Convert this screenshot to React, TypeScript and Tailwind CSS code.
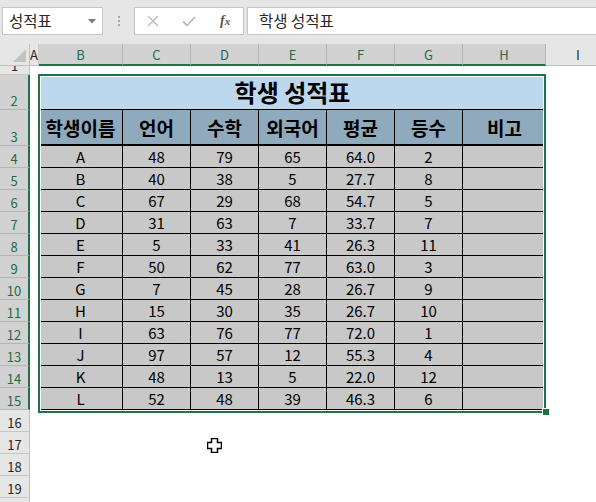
import React from "react";

const cols = [
  { key: "A", w: "w-[9px]", sel: false },
  { key: "B", w: "w-[84px]", sel: true },
  { key: "C", w: "w-[68px]", sel: true },
  { key: "D", w: "w-[68px]", sel: true },
  { key: "E", w: "w-[68px]", sel: true },
  { key: "F", w: "w-[68px]", sel: true },
  { key: "G", w: "w-[68px]", sel: true },
  { key: "H", w: "w-[83px]", sel: true },
];

const tableCols = ["w-[84px]", "w-[68px]", "w-[68px]", "w-[68px]", "w-[68px]", "w-[68px]", "w-[83px]"];

const headers = ["학생이름", "언어", "수학", "외국어", "평균", "등수", "비고"];

const students = [
  ["A", "48", "79", "65", "64.0", "2"],
  ["B", "40", "38", "5", "27.7", "8"],
  ["C", "67", "29", "68", "54.7", "5"],
  ["D", "31", "63", "7", "33.7", "7"],
  ["E", "5", "33", "41", "26.3", "11"],
  ["F", "50", "62", "77", "63.0", "3"],
  ["G", "7", "45", "28", "26.7", "9"],
  ["H", "15", "30", "35", "26.7", "10"],
  ["I", "63", "76", "77", "72.0", "1"],
  ["J", "97", "57", "12", "55.3", "4"],
  ["K", "48", "13", "5", "22.0", "12"],
  ["L", "52", "48", "39", "46.3", "6"],
];

// row headers: label, height class, selected
const rowHeads = [
  { n: "1", h: "h-[9px]", sel: false },
  { n: "2", h: "h-[35px]", sel: true },
  { n: "3", h: "h-[36px]", sel: true },
  ...Array.from({ length: 12 }, (_, i) => ({ n: String(i + 4), h: "h-[22px]", sel: true })),
  ...Array.from({ length: 4 }, (_, i) => ({ n: String(i + 16), h: "h-[22px]", sel: false })),
  { n: "", h: "h-[22px]", sel: false },
];

const FormulaBar = () => (
  <div className="h-[44px] bg-[#e6e6e6] flex items-start pt-[7px] pl-[2px]">
    {/* Name box */}
    <div className="w-[101px] h-[28px] bg-white border border-[#c6c6c6] flex items-center justify-between pl-[6px] pr-[6px]">
      <span className="text-[15.5px] text-[#262626] leading-none">성적표</span>
      <svg width="8" height="5" viewBox="0 0 8 5">
        <path d="M0 0 L8 0 L4 4.5 Z" fill="#7a7a7a" />
      </svg>
    </div>
    {/* dots */}
    <div className="w-[31px] h-[28px] flex flex-col items-center justify-center gap-[2px]">
      <span className="w-[2px] h-[2px] bg-[#a6a6a6]" />
      <span className="w-[2px] h-[2px] bg-[#a6a6a6]" />
      <span className="w-[2px] h-[2px] bg-[#a6a6a6]" />
    </div>
    {/* buttons */}
    <div className="w-[110px] h-[28px] bg-white border border-[#c6c6c6] flex items-center">
      <div className="w-[37px] flex justify-center">
        <svg width="12" height="12" viewBox="0 0 12 12">
          <path d="M1 1 L11 11 M11 1 L1 11" stroke="#bcbcbc" strokeWidth="1.4" />
        </svg>
      </div>
      <div className="w-[36px] flex justify-center">
        <svg width="14" height="11" viewBox="0 0 14 11">
          <path d="M1 5.5 L5 9.5 L13 1" stroke="#bcbcbc" strokeWidth="1.8" fill="none" />
        </svg>
      </div>
      <div className="w-[36px] flex justify-center">
        <span
          className="italic font-bold text-[14px] text-[#555] leading-none"
          style={{ fontFamily: '"Liberation Serif", serif' }}
        >
          f<span className="text-[11px]">x</span>
        </span>
      </div>
    </div>
    {/* formula input */}
    <div className="ml-[3px] flex-1 h-[28px] bg-white border border-[#c6c6c6] border-r-0 flex items-center pl-[11px]">
      <span className="text-[15.5px] text-[#262626] leading-none">학생 성적표</span>
    </div>
  </div>
);

const ColumnHeaders = () => (
  <div className="h-[22px] flex bg-[#e6e6e6]">
    {/* corner */}
    <div className="w-[30px] h-[22px] border-r border-b border-[#bfbfbf] flex items-end justify-end pr-[3px] pb-[3px]">
      <svg width="13" height="13" viewBox="0 0 13 13">
        <path d="M13 0 L13 13 L0 13 Z" fill="#c2c2c2" />
      </svg>
    </div>
    {cols.map((c) => (
      <div
        key={c.key}
        className={`${c.w} h-[22px] flex items-center justify-center text-[13px] leading-none overflow-hidden ${
          c.sel
            ? "bg-[#d2d2d2] text-[#1f6b47] border-r border-r-[#b5b5b5] border-b-2 border-b-[#217346]"
            : "bg-[#e6e6e6] text-[#262626] border-r border-r-[#c6c6c6] border-b border-b-[#bfbfbf]"
        }`}
      >
        {c.key}
      </div>
    ))}
    <div className="flex-1 h-[22px] flex items-center text-[13px] leading-none text-[#262626] border-b border-[#bfbfbf] pl-[30px]">
      I
    </div>
  </div>
);

const RowHeaders = () => (
  <div className="w-[30px] flex flex-col shrink-0">
    {rowHeads.map((r, i) => (
      <div
        key={i}
        className={`${r.h} flex items-end justify-center pb-[2px] text-[13px] leading-none border-b overflow-hidden ${
          r.sel
            ? "bg-[#d2d2d2] text-[#1f6b47] border-b-[#b5b5b5] border-r-2 border-r-[#217346]"
            : "bg-[#e6e6e6] text-[#262626] border-b-[#c6c6c6] border-r border-r-[#bfbfbf]"
        }`}
      >
        {r.n}
      </div>
    ))}
  </div>
);

const ScoreTable = () => (
  <div className="ml-[9px] w-[507px] text-black">
    <div className="h-[35px] bg-[#bdd7ee] border-b border-black flex items-center justify-center">
      <span className="text-[24px] font-bold leading-none">학생 성적표</span>
    </div>
    <div className="h-[36px] flex bg-[#8faabd] border-b-2 border-black">
      {headers.map((h, i) => (
        <div
          key={h}
          className={`${tableCols[i]} flex items-center justify-center text-[19px] font-bold leading-none ${
            i < 6 ? "border-r border-black" : ""
          }`}
        >
          {h}
        </div>
      ))}
    </div>
    {students.map((s) => (
      <div key={s[0]} className="h-[22px] flex bg-[#c8c8c8] border-b border-black">
        {[...s, ""].map((v, i) => (
          <div
            key={i}
            className={`${tableCols[i]} flex items-center justify-center text-[15px] leading-none ${
              i < 6 ? "border-r border-black" : ""
            }`}
          >
            {v}
          </div>
        ))}
      </div>
    ))}
  </div>
);

export default function App() {
  return (
    <div
      className="w-[596px] h-[502px] overflow-hidden bg-white"
      style={{ fontFamily: '"Noto Sans CJK KR", "Noto Sans", sans-serif' }}
    >
      <FormulaBar />
      <ColumnHeaders />
      <div className="flex">
        <RowHeaders />
        <div className="relative flex-1">
          <div className="h-[9px]" />
          <ScoreTable />
          {/* selection border */}
          <div className="absolute left-[8px] top-[8px] w-[508px] h-[339px] border-2 border-[#217346] pointer-events-none">
            <div className="w-full h-full border border-white" />
          </div>
          {/* fill handle */}
          <div className="absolute left-[512px] top-[342px] w-[8px] h-[8px] bg-[#217346] border border-white" />
          {/* cell cursor */}
          <svg className="absolute left-[177px] top-[372px]" width="15" height="15" viewBox="0 0 15 15">
            <path
              d="M4.5 0.5 H10.5 V4.5 H14.5 V10.5 H10.5 V14.5 H4.5 V10.5 H0.5 V4.5 H4.5 Z"
              fill="white"
              stroke="black"
              strokeWidth="1.5"
            />
          </svg>
        </div>
      </div>
    </div>
  );
}
